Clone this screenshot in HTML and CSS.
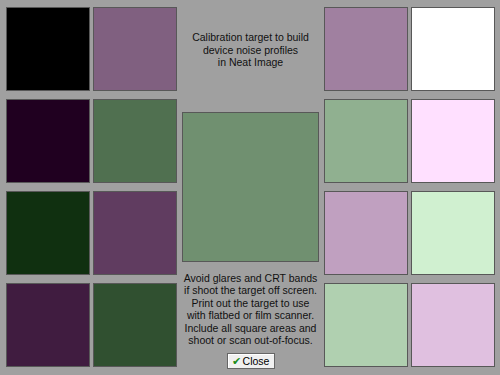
FILE: index.html
```html
<!DOCTYPE html>
<html lang="en">
<head>
    <meta charset="UTF-8">
    <meta name="viewport" content="width=device-width, initial-scale=1.0">
    <title>Calibration Target</title>
    <link rel="stylesheet" href="styles.css">
</head>
<body>
    <div class="target">
        <div class="patches">
            <div class="patch" style="background-color: #000000;"></div>
            <div class="patch" style="background-color: #806080;"></div>
            <div class="patch" style="background-color: #200020;"></div>
            <div class="patch" style="background-color: #507050;"></div>
            <div class="patch" style="background-color: #103010;"></div>
            <div class="patch" style="background-color: #603c60;"></div>
            <div class="patch" style="background-color: #401c40;"></div>
            <div class="patch" style="background-color: #305030;"></div>
        </div>

        <div class="middle">
            <p class="note top-note">Calibration target to build<br>device noise profiles<br>in Neat Image</p>
            <div class="big-patch"></div>
            <p class="note">Avoid glares and CRT bands<br>if shoot the target off screen.<br>Print out the target to use<br>with flatbed or film scanner.<br>Include all square areas and<br>shoot or scan out-of-focus.</p>
            <button class="close-btn"><span class="check">&#10004;</span>Close</button>
        </div>

        <div class="patches">
            <div class="patch" style="background-color: #a080a0;"></div>
            <div class="patch" style="background-color: #ffffff;"></div>
            <div class="patch" style="background-color: #90b090;"></div>
            <div class="patch" style="background-color: #ffe0ff;"></div>
            <div class="patch" style="background-color: #c0a0c0;"></div>
            <div class="patch" style="background-color: #d0f0d0;"></div>
            <div class="patch" style="background-color: #b0d0b0;"></div>
            <div class="patch" style="background-color: #e0c0e0;"></div>
        </div>
    </div>
</body>
</html>
```

FILE: styles.css
```css
body {
    margin: 0;
    background-color: #a0a0a0;
    font-family: "Liberation Sans", Arial, sans-serif;
    color: #000;
}
.target {
    display: flex;
    width: 500px;
    height: 375px;
    padding: 7px 5px 0 6px;
    box-sizing: border-box;
}
.patches {
    display: grid;
    grid-template-columns: 84px 84px;
    grid-auto-rows: 84px;
    column-gap: 3px;
    row-gap: 8px;
}
.patch {
    border: 1px solid #585858;
    box-sizing: border-box;
}
.middle {
    width: 147px;
    display: flex;
    flex-direction: column;
    align-items: center;
}
.note {
    margin: 0;
    font-size: 10.5px;
    line-height: 12.5px;
    text-align: center;
    color: #111;
}
.top-note {
    margin-top: 24px;
}
.big-patch {
    width: 137px;
    height: 150px;
    margin: 43px 0 10px;
    background-color: #709070;
    border: 1px solid #585858;
    box-sizing: border-box;
}
.close-btn {
    margin-top: 6px;
    width: 48px;
    height: 16px;
    padding: 0;
    font-family: "Liberation Sans", Arial, sans-serif;
    font-size: 10.5px;
    line-height: 14px;
    color: #000;
    background-color: #f0f0f0;
    border: 1px solid #666;
    box-shadow: inset 1px 1px 0 #fff;
}
.check {
    color: #1c8c1c;
    font-size: 11px;
    margin-right: 2px;
}
```
